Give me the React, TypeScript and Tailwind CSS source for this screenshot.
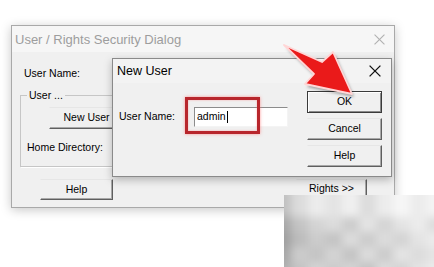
import React from "react";

const XIcon = ({ color, size, w }: { color: string; size: number; w: number }) => (
  <svg width={size} height={size} viewBox="0 0 10 10">
    <line x1="0.5" y1="0.5" x2="9.5" y2="9.5" stroke={color} strokeWidth={w} />
    <line x1="9.5" y1="0.5" x2="0.5" y2="9.5" stroke={color} strokeWidth={w} />
  </svg>
);

const btn =
  "flex items-center justify-center bg-[#f0f0f0] border border-t-[#e6e6e6] border-l-[#f0f0f0] border-r-[#5f5f5f] border-b-[#5f5f5f] shadow-[inset_-1px_-1px_0_#a8a8a8] text-[10.5px] text-black";

const blurColors = [
  ["#c0c0c0", "#dcdcdc", "#ececec", "#e4e4e4", "#f0f0f0", "#dcdcdc", "#ececec", "#f6f6f6", "#ececec", "#f4f4f4"],
  ["#a8a8a8", "#c4c4c4", "#d4d4d4", "#dcdcdc", "#cccccc", "#e4e4e4", "#d4d4d4", "#e4e4e4", "#ececec", "#dcdcdc"],
  ["#a0a0a0", "#bcbcbc", "#cccccc", "#c4c4c4", "#dcdcdc", "#cccccc", "#dcdcdc", "#d4d4d4", "#e4e4e4", "#ececec"],
  ["#a8a8a8", "#cccccc", "#c4c4c4", "#d4d4d4", "#c4c4c4", "#dcdcdc", "#cccccc", "#e4e4e4", "#dcdcdc", "#e4e4e4"],
  ["#b0b0b0", "#c4c4c4", "#d4d4d4", "#cccccc", "#d4d4d4", "#c4c4c4", "#dcdcdc", "#d4d4d4", "#e4e4e4", "#ececec"],
];

const arrowPts = "284,45 322,62 333,52 352,94 305,84 314,74";

export default function App() {
  return (
    <div className="relative w-[434px] h-[267px] overflow-hidden bg-white font-['Liberation_Sans',Arial,sans-serif] text-black">
      {/* Outer dialog */}
      <div className="absolute left-[11px] top-[25px] w-[384px] h-[183px] bg-[#f0f0f0] border border-[#a9a9a9] shadow-[0_2px_10px_rgba(0,0,0,0.22)] flex flex-col">
        <div className="h-[26px] flex items-center justify-between pl-[3px] pr-[9px] bg-[#f6f6f6]">
          <span className="text-[13px] text-[#9d9d9d] leading-none">User / Rights Security Dialog</span>
          <XIcon color="#b0b0b0" size={11} w={1} />
        </div>
        <div className="flex flex-col pl-[8px]">
          <div className="mt-[14px] ml-[4px] h-[14px] leading-[14px] text-[10.5px]">User Name:</div>
          <fieldset className="mt-[8px] w-[280px] h-[79px] border border-[#c6c6c6] shadow-[1px_1px_0_#ffffff] px-[6px] flex flex-col">
            <legend className="px-[2px] text-[10.5px] leading-[14px]">User ...</legend>
            <div className={`${btn} mt-[5px] ml-[22px] w-[75px] h-[22px]`}>New User</div>
            <div className="mt-[11px] h-[14px] leading-[14px] text-[10.5px]">Home Directory:</div>
          </fieldset>
          <div className="flex mt-[12px]">
            <div className={`${btn} ml-[20px] w-[73px] h-[21px]`}>Help</div>
            <div className={`${btn} ml-[183px] w-[71px] h-[19px]`}>Rights &gt;&gt;</div>
          </div>
        </div>
      </div>

      {/* New User dialog */}
      <div className="absolute left-[112px] top-[58px] w-[280px] h-[119px] bg-[#f0f0f0] border border-[#8a8a8a] shadow-[0_3px_8px_rgba(0,0,0,0.25)] flex flex-col">
        <div className="h-[24px] flex items-center justify-between pl-[4px] pr-[10px] bg-[#f3f3f3]">
          <span className="text-[12.5px] leading-none">New User</span>
          <XIcon color="#111111" size={12} w={1.1} />
        </div>
        <div className="flex">
          <div className="flex items-center mt-[24px] pl-[6px] h-[20px]">
            <span className="w-[75px] text-[10.5px]">User Name:</span>
            <div className="w-[94px] h-[20px] bg-white border border-t-[#8c8c8c] border-l-[#8c8c8c] border-r-[#f4f4f4] border-b-[#f4f4f4] flex items-center pl-[2px] text-[10.5px]">
              admin<span className="inline-block w-[1px] h-[12px] bg-black ml-[1px]" />
            </div>
          </div>
          <div className="ml-auto mr-[9px] mt-[8px] flex flex-col gap-[5px]">
            <div className="w-[75px] h-[22px] flex items-center justify-center bg-[#f0f0f0] border border-[#3a3a3a] shadow-[inset_1px_1px_0_#ffffff,inset_-1px_-1px_0_#8a8a8a] text-[10.5px]">OK</div>
            <div className={`${btn} w-[75px] h-[22px]`}>Cancel</div>
            <div className={`${btn} w-[75px] h-[22px]`}>Help</div>
          </div>
        </div>
      </div>

      {/* Red highlight box */}
      <div className="absolute left-[185px] top-[97px] w-[75px] h-[37px] border-[3px] border-[#b8262c] shadow-[0_0_3px_rgba(255,110,110,0.7),inset_0_0_2px_rgba(255,110,110,0.6)]" />

      {/* Red arrow */}
      <svg className="absolute left-0 top-0 pointer-events-none" width="434" height="267" viewBox="0 0 434 267">
        <defs>
          <filter id="sh" x="-20%" y="-20%" width="140%" height="140%">
            <feGaussianBlur stdDeviation="1.5" />
          </filter>
        </defs>
        <polygon points={arrowPts} fill="rgba(0,0,0,0.35)" transform="translate(2,3)" filter="url(#sh)" />
        <polygon points={arrowPts} fill="#ea1a1a" stroke="#ffd6d6" strokeWidth="1.8" strokeLinejoin="round" />
      </svg>

      {/* Blurred watermark */}
      <div className="absolute left-[284px] top-[195px] w-[150px] h-[72px] overflow-hidden">
        <div className="grid grid-cols-10 w-[170px] h-[90px] -ml-[10px] -mt-[8px] blur-[4px]">
          {[blurColors[0], ...blurColors].map((row, r) =>
            row.map((c, i) => <div key={`${r}-${i}`} style={{ backgroundColor: c }} />)
          )}
        </div>
      </div>
    </div>
  );
}
